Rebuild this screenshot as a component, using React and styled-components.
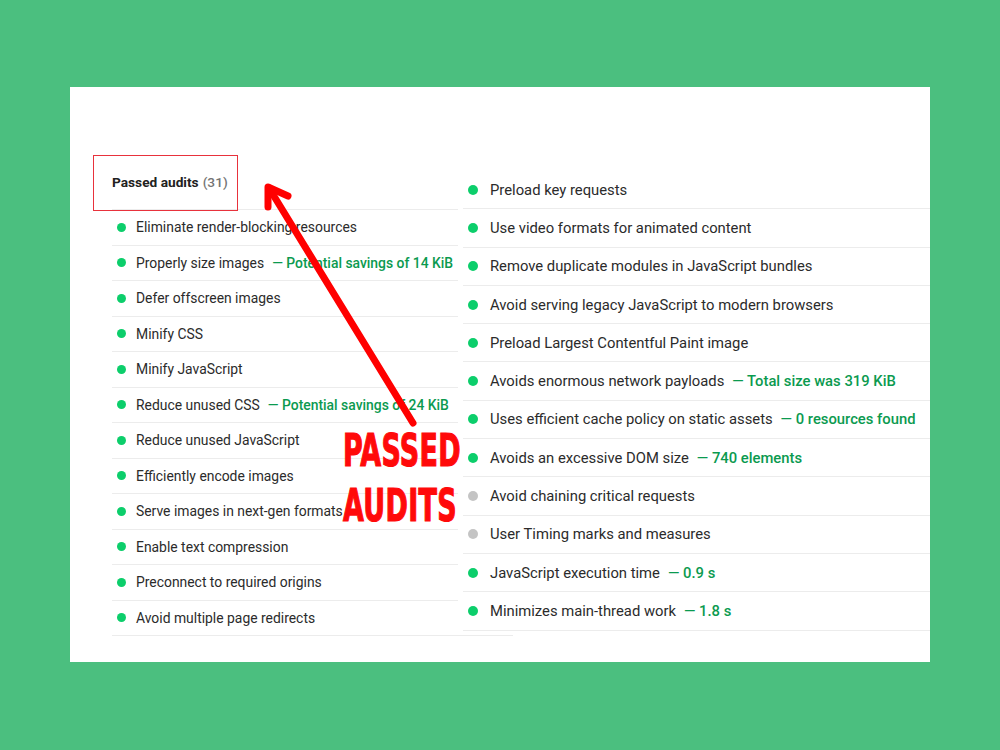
import React from "react";
import styled, { createGlobalStyle } from "styled-components";

const Global = createGlobalStyle`
  html, body { margin: 0; padding: 0; }
  body {
    background: #4bbf7f;
    font-family: Roboto, "Liberation Sans", sans-serif;
    -webkit-font-smoothing: antialiased;
  }
`;

const Stage = styled.div`
  width: 1000px;
  height: 750px;
  padding-top: 87px;
  box-sizing: border-box;
`;

const Panel = styled.section`
  position: relative;
  margin-left: 70px;
  width: 860px;
  height: 575px;
  background: #ffffff;
  display: grid;
  grid-template-columns: 346px 467px;
  column-gap: 5px;
  padding-left: 42px;
  box-sizing: border-box;
`;

const Column = styled.div`
  display: flex;
  flex-direction: column;
  padding-top: ${(p) => p.$top}px;
`;

const GroupHeader = styled.div`
  height: 55px;
  display: flex;
  align-items: center;
  font-size: 13.7px;
  font-weight: 700;
  color: #212121;
  border-bottom: 1px solid #ececec;
  box-sizing: border-box;
`;

const Count = styled.span`
  color: #757575;
  font-weight: 500;
  margin-left: 4px;
`;

const Row = styled.div`
  display: flex;
  align-items: center;
  height: ${(p) => p.$h}px;
  box-sizing: border-box;
  border-bottom: 1px solid #ececec;
  padding-left: 5px;
  gap: ${(p) => p.$gap}px;
  font-size: ${(p) => p.$fs}px;
  color: #2b2b2b;
  white-space: nowrap;
  margin-right: ${(p) => (p.$wide ? -55 : 0)}px;
`;

const Dot = styled.span`
  flex: none;
  width: ${(p) => p.$d}px;
  height: ${(p) => p.$d}px;
  border-radius: 50%;
  background: ${(p) => (p.$na ? "#c4c4c4" : "#0cce6b")};
`;

const Detail = styled.span`
  color: #0b9a4f;
  font-weight: 500;
  margin-left: 8px;
`;

const Highlight = styled.div`
  position: absolute;
  left: 23px;
  top: 68px;
  width: 145px;
  height: 56px;
  border: 1.5px solid #e8323c;
  box-sizing: border-box;
`;

const Overlay = styled.svg`
  position: absolute;
  left: 0;
  top: 0;
  pointer-events: none;
`;

const Callout = styled.div`
  position: absolute;
  left: 273px;
  top: ${(p) => p.$top}px;
  font-family: "DejaVu Sans Condensed", "DejaVu Sans", sans-serif;
  font-stretch: condensed;
  font-weight: 700;
  font-size: 44px;
  line-height: 44px;
  color: #ff0a0a;
  -webkit-text-stroke: 1.2px #ff0a0a;
  transform: scaleX(0.68);
  transform-origin: left top;
  letter-spacing: 0.5px;
`;

const left = [
  ["Eliminate render-blocking resources"],
  ["Properly size images", "Potential savings of 14 KiB"],
  ["Defer offscreen images"],
  ["Minify CSS"],
  ["Minify JavaScript"],
  ["Reduce unused CSS", "Potential savings of 24 KiB"],
  ["Reduce unused JavaScript"],
  ["Efficiently encode images"],
  ["Serve images in next-gen formats"],
  ["Enable text compression"],
  ["Preconnect to required origins"],
  ["Avoid multiple page redirects"],
];

const right = [
  ["Preload key requests"],
  ["Use video formats for animated content"],
  ["Remove duplicate modules in JavaScript bundles"],
  ["Avoid serving legacy JavaScript to modern browsers"],
  ["Preload Largest Contentful Paint image"],
  ["Avoids enormous network payloads", "Total size was 319 KiB"],
  ["Uses efficient cache policy on static assets", "0 resources found"],
  ["Avoids an excessive DOM size", "740 elements"],
  ["Avoid chaining critical requests", null, true],
  ["User Timing marks and measures", null, true],
  ["JavaScript execution time", "0.9 s"],
  ["Minimizes main-thread work", "1.8 s"],
];

function Audit({ title, detail, na, h, fs, d, gap, wide }) {
  return (
    <Row $h={h} $fs={fs} $gap={gap} $wide={wide}>
      <Dot $d={d} $na={na} />
      <span>
        {title}
        {detail && <Detail>— {detail}</Detail>}
      </span>
    </Row>
  );
}

export default function App() {
  return (
    <Stage>
      <Global />
      <Panel>
        <Column $top={68}>
          <GroupHeader>
            Passed audits<Count>(31)</Count>
          </GroupHeader>
          {left.map(([t, dt], i) => (
            <Audit
              key={t}
              title={t}
              detail={dt}
              h={35.5}
              fs={13.9}
              d={9}
              gap={10}
              wide={i === left.length - 1}
            />
          ))}
        </Column>
        <Column $top={84}>
          {right.map(([t, dt, na]) => (
            <Audit key={t} title={t} detail={dt} na={na} h={38.3} fs={14.8} d={10} gap={12} />
          ))}
        </Column>

        <Highlight />
        <Overlay width="860" height="575" viewBox="0 0 860 575">
          <g stroke="#ff0000" strokeWidth="7" strokeLinecap="round" fill="none">
            <line x1="343" y1="336" x2="199" y2="101" />
            <polyline points="198,120 198,100 218,109" strokeLinejoin="round" />
          </g>
        </Overlay>
        <Callout $top={342}>PASSED</Callout>
        <Callout $top={397}>AUDITS</Callout>
      </Panel>
    </Stage>
  );
}
